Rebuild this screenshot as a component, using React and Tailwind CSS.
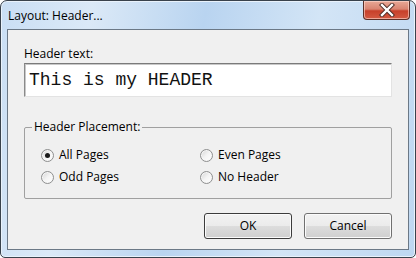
import React from 'react';

const Radio = ({ label, checked }) => {
    return (
        <label className="flex items-center h-[22px]">
            <span className="flex items-center justify-center w-[13px] h-[13px] rounded-full border border-[#8e8f8f] bg-gradient-to-br from-[#d4d4d4] via-[#f4f4f4] to-white shadow-[inset_0_0_0_1px_#f6f6f6]">
                {checked && <span className="w-[5px] h-[5px] rounded-full bg-[#1a1a1a]" />}
            </span>
            <span className="ml-[5px] text-[12px] text-black">{label}</span>
        </label>
    );
};

const Button = ({ children, isDefault }) => {
    return (
        <button
            className={
                isDefault
                    ? 'w-[88px] h-[26px] rounded-[3px] border border-[#3c3c3c] bg-[linear-gradient(#f2f2f2_0%,#ebebeb_50%,#dddddd_50%,#cfcfcf_100%)] shadow-[inset_0_0_0_1px_#fbfbfb] text-[12px] text-black'
                    : 'w-[88px] h-[26px] rounded-[3px] border border-[#707070] bg-[linear-gradient(#f2f2f2_0%,#ebebeb_50%,#dddddd_50%,#cfcfcf_100%)] shadow-[inset_0_0_0_1px_#fbfbfb] text-[12px] text-black'
            }
        >
            {children}
        </button>
    );
};

export default function App() {
    return (
        <div
            className="w-[416px] h-[258px] flex flex-col rounded-t-[7px] rounded-b-[5px] border border-[#39424c] bg-[linear-gradient(100deg,#c9def4_0%,#dbe9f7_20%,#b9d4f0_45%,#d3e5f6_70%,#bed7f1_100%)] shadow-[inset_0_0_0_1px_#e9f2fb] overflow-hidden"
            style={{ fontFamily: '"Open Sans", "Noto Sans", sans-serif' }}
        >
            {/* Title bar */}
            <div className="h-[28px] flex items-start justify-between">
                <span className="mt-[7px] ml-[7px] text-[12px] leading-[16px] text-black">Layout: Header...</span>
                <div className="relative mr-[5px] w-[47px] h-[19px] rounded-b-[4px] border border-t-0 border-[#5b3028] bg-[linear-gradient(#e8a896_0%,#d98471_45%,#c7402a_55%,#d35a42_100%)] shadow-[inset_0_0_0_1px_rgba(255,220,210,0.6)] flex items-center justify-center">
                    <svg width="16" height="14" viewBox="0 0 16 14">
                        <path d="M3 2 L13 12 M13 2 L3 12" stroke="#4a2a24" strokeWidth="4.2" strokeLinecap="square" />
                        <path d="M3 2 L13 12 M13 2 L3 12" stroke="#ffffff" strokeWidth="2.4" strokeLinecap="square" />
                    </svg>
                </div>
            </div>

            {/* Client area */}
            <div className="mx-[6px] mb-[7px] flex-1 flex flex-col border border-[#6b7886] bg-[#f0f0f0] px-[16px]">
                <div className="pt-[16px] text-[12px] leading-[16px] text-black">Header text:</div>
                <div className="mt-[1px] h-[34px] flex items-center border border-t-[#7a7a7a] border-l-[#8a8a8a] border-r-[#e3e3e3] border-b-[#e3e3e3] bg-white shadow-[inset_1px_1px_0_#c8c8c8] pl-[4px]">
                    <span className="text-[18px] leading-[20px] text-[#111]" style={{ fontFamily: '"Liberation Mono", monospace' }}>
                        This is my HEADER
                    </span>
                </div>

                <fieldset className="mt-[22px] h-[80px] border border-[#a0a0a0] rounded-[2px] px-0 pt-[9px]">
                    <legend className="ml-[7px] px-[2px] text-[12px] leading-[16px] text-black">Header Placement:</legend>
                    <div className="grid grid-cols-[159px_1fr] pl-[16px]">
                        <Radio label="All Pages" checked />
                        <Radio label="Even Pages" />
                        <Radio label="Odd Pages" />
                        <Radio label="No Header" />
                    </div>
                </fieldset>

                <div className="mt-[14px] flex justify-end gap-[12px]">
                    <Button isDefault>OK</Button>
                    <Button>Cancel</Button>
                </div>
            </div>
        </div>
    );
}
